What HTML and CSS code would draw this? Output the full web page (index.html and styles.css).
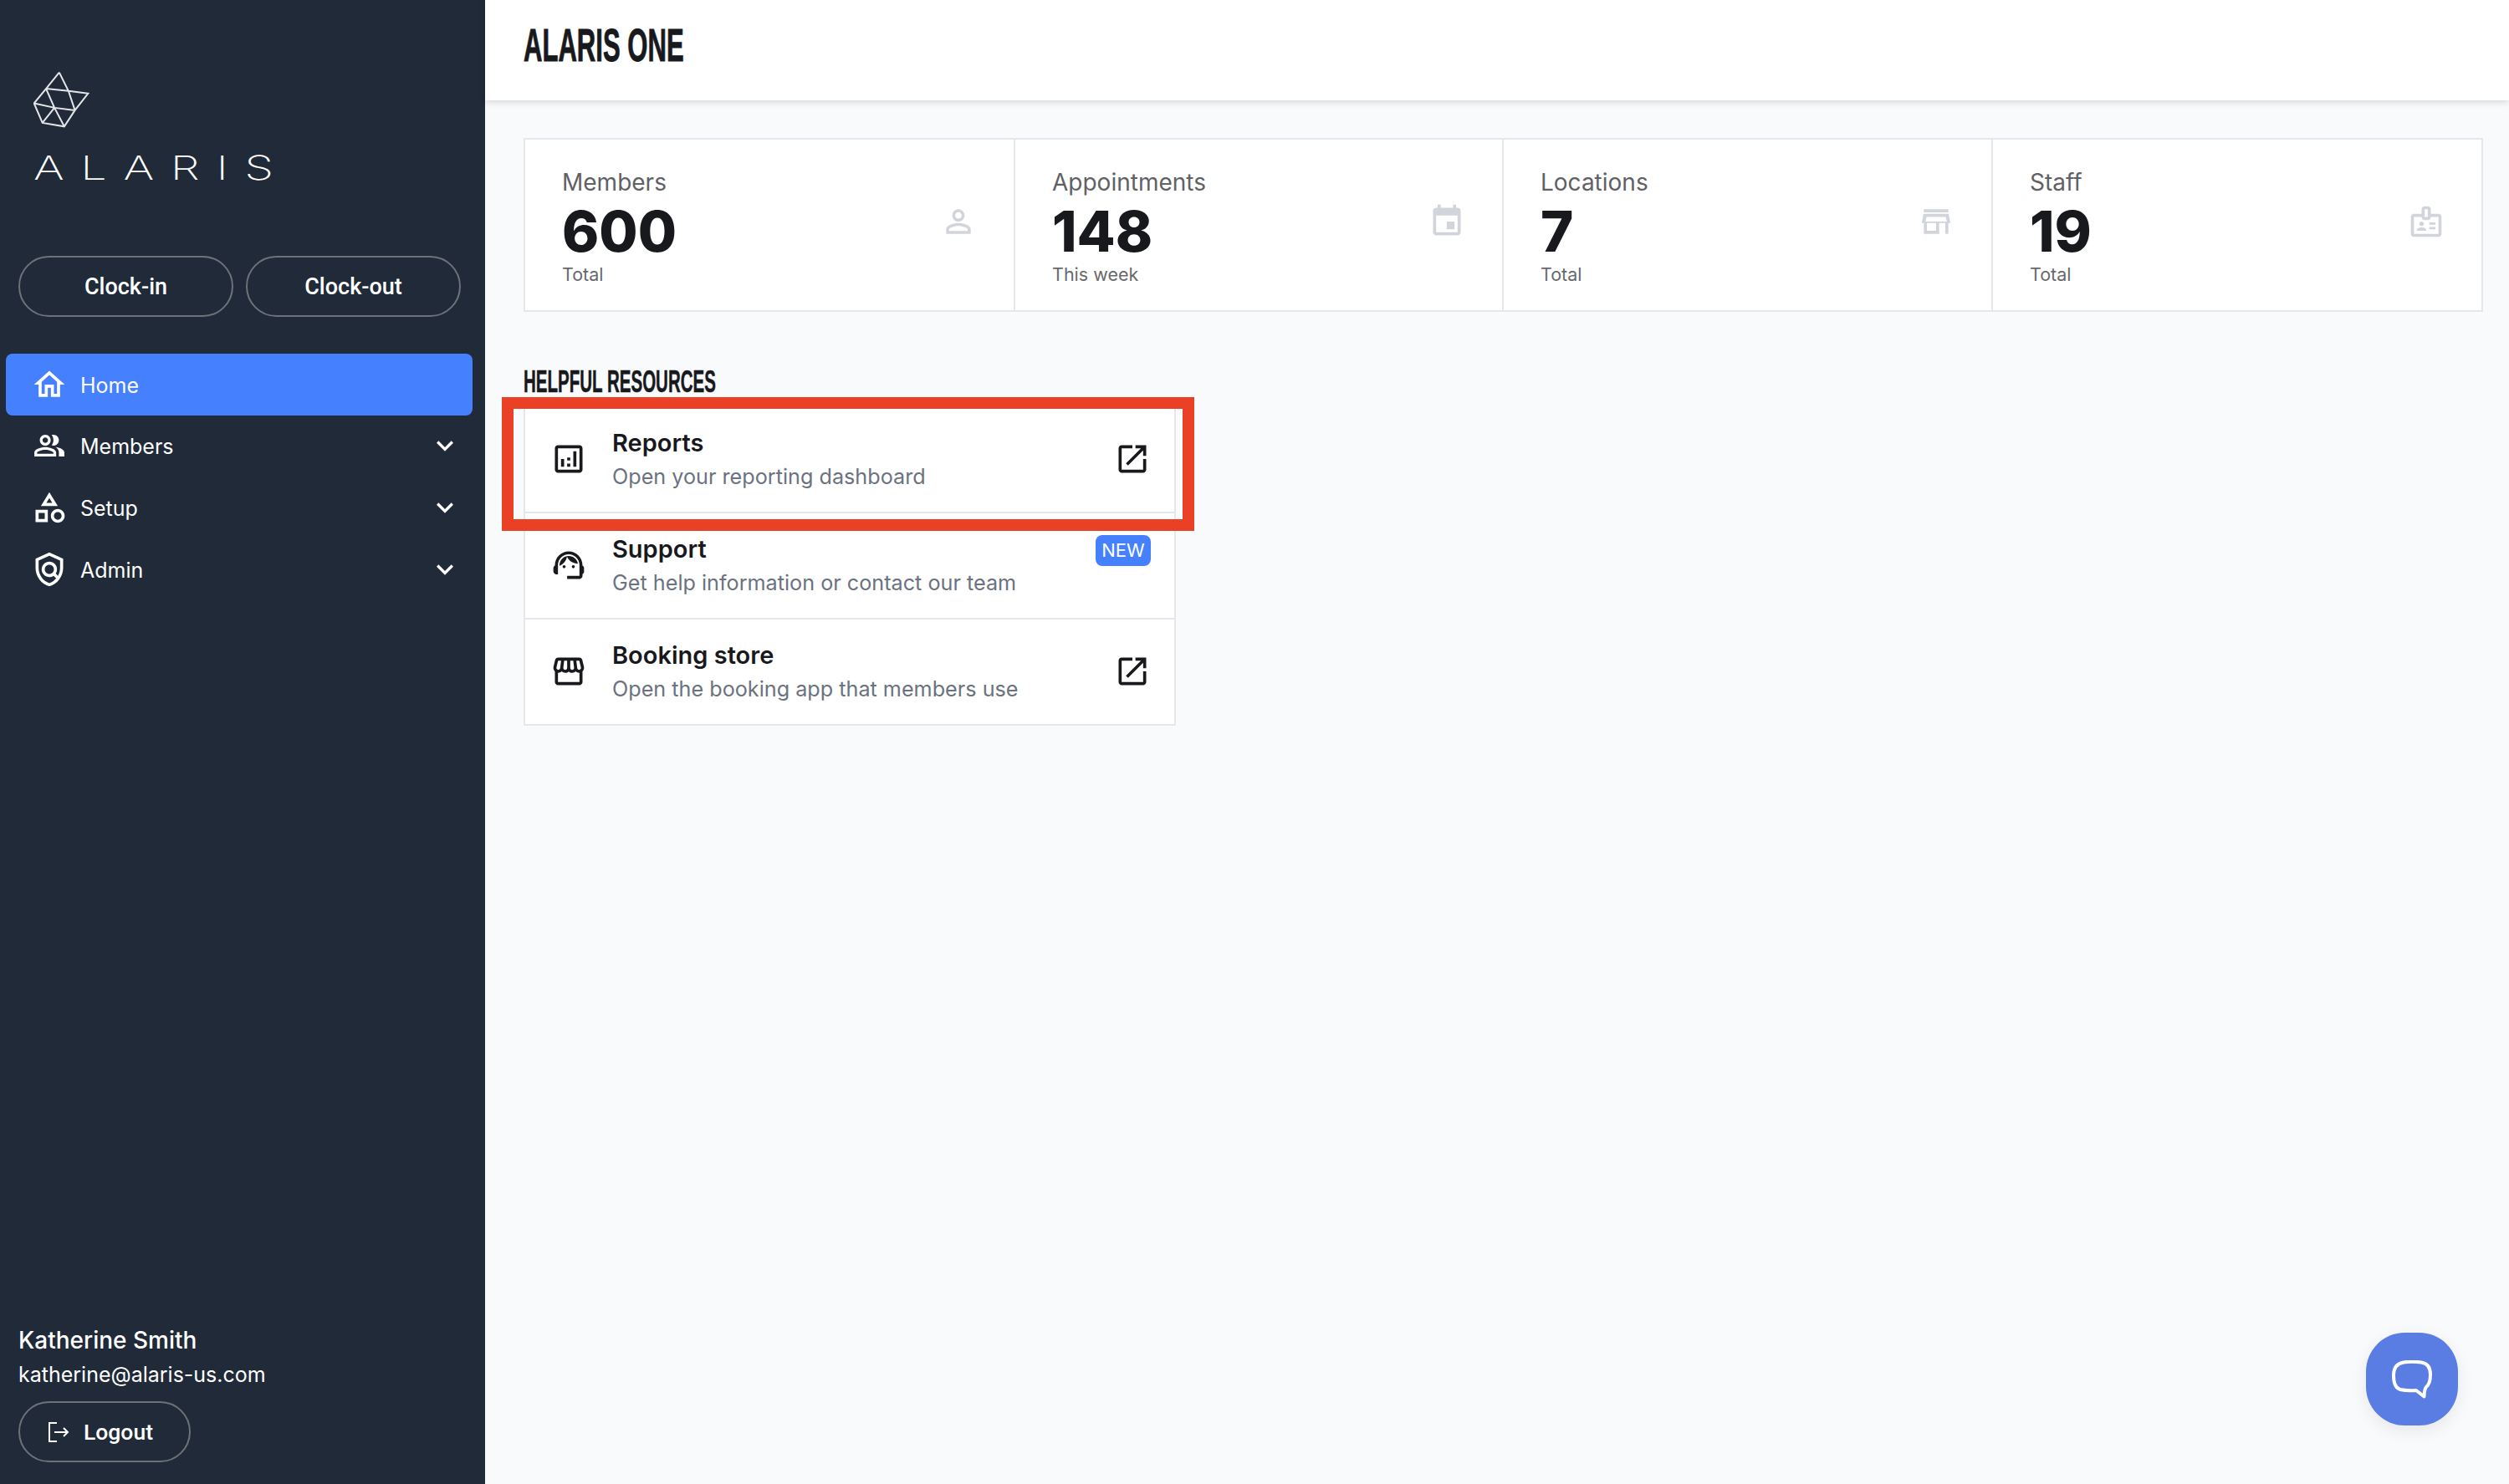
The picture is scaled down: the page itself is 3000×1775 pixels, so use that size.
FILE: index.html
```html
<!DOCTYPE html>
<html lang="en">
<head>
  <meta charset="UTF-8">
  <title>Alaris One</title>
  <link rel="stylesheet" href="styles.css">
</head>

<body>
  <!-- Sidebar -->
  <aside class="sidebar">
    <div class="logo">
      <svg class="logo-mark" viewBox="60 50 200 200">
        <path d="M152 52L105 110L62 162L92 232L170 245L208 187L255 127L185 118L105 110M152 52L185 118L208 187M105 110L135 178L170 245M62 162L135 178L208 187M135 178L92 232"/>
      </svg>
      <div class="logo-text">ALARIS</div>
    </div>

    <div class="clock-btns">
      <button class="pill-btn">Clock-in</button>
      <button class="pill-btn">Clock-out</button>
    </div>

    <nav class="nav">
      <a class="nav-item active">
        <svg class="nav-icon" viewBox="0 0 24 24"><path d="M12 5.69l5 4.5V18h-2v-6H9v6H7v-7.81l5-4.5M12 3L2 12h3v8h6v-6h2v6h6v-8h3L12 3z"/></svg>
        <span>Home</span>
      </a>
      <a class="nav-item">
        <svg class="nav-icon" viewBox="-1.5 -1.5 27 27"><path d="M16.67 13.13C18.04 14.06 19 15.32 19 17v3h4v-3c0-2.18-3.57-3.47-6.33-3.87z"/><path d="M15 12c2.21 0 4-1.79 4-4s-1.79-4-4-4c-.47 0-.91.1-1.33.24C14.5 5.27 15 6.58 15 8s-.5 2.73-1.33 3.76c.42.14.86.24 1.33.24z"/><path d="M9 12c2.21 0 4-1.79 4-4s-1.79-4-4-4-4 1.79-4 4 1.79 4 4 4zm0-6c1.1 0 2 .9 2 2s-.9 2-2 2-2-.9-2-2 .9-2 2-2z"/><path d="M9 13c-2.67 0-8 1.34-8 4v3h16v-3c0-2.66-5.33-4-8-4zm6 5H3v-.99C3.2 16.29 6.3 15 9 15s5.8 1.29 6 2v1z"/></svg>
        <span>Members</span>
        <svg class="chevron" viewBox="0 0 24 24"><path d="M16.59 8.59L12 13.17 7.41 8.59 6 10l6 6 6-6z"/></svg>
      </a>
      <a class="nav-item">
        <svg class="nav-icon" viewBox="0 0 24 24"><path d="M12 2l-5.5 9h11L12 2zm0 3.84L13.93 9h-3.87L12 5.84zM17.5 13c-2.49 0-4.5 2.01-4.5 4.5s2.01 4.5 4.5 4.5 4.5-2.01 4.5-4.5-2.01-4.5-4.5-4.5zm0 7c-1.38 0-2.5-1.12-2.5-2.5s1.12-2.5 2.5-2.5 2.5 1.12 2.5 2.5-1.12 2.5-2.5 2.5zM3 21.5h8v-8H3v8zm2-6h4v4H5v-4z"/></svg>
        <span>Setup</span>
        <svg class="chevron" viewBox="0 0 24 24"><path d="M16.59 8.59L12 13.17 7.41 8.59 6 10l6 6 6-6z"/></svg>
      </a>
      <a class="nav-item">
        <svg class="nav-icon" viewBox="0 0 24 24"><path d="M21,5l-9-4L3,5v6c0,5.55,3.84,10.74,9,12c5.16-1.26,9-6.45,9-12V5z M19,11c0,1.85-0.51,3.65-1.38,5.21l-1.45-1.45 c1.29-1.94,1.07-4.58-0.64-6.29c-1.95-1.95-5.12-1.95-7.07,0c-1.95,1.95-1.95,5.12,0,7.07c1.71,1.71,4.35,1.92,6.29,0.64 l1.72,1.72c-1.19,1.42-2.73,2.51-4.47,3.04C7.98,19.69,5,15.52,5,11V6.3l7-3.11l7,3.11V11z M12,15c-1.66,0-3-1.34-3-3 s1.34-3,3-3s3,1.34,3,3S13.66,15,12,15z"/></svg>
        <span>Admin</span>
        <svg class="chevron" viewBox="0 0 24 24"><path d="M16.59 8.59L12 13.17 7.41 8.59 6 10l6 6 6-6z"/></svg>
      </a>
    </nav>

    <div class="user">
      <div class="user-name">Katherine Smith</div>
      <div class="user-email">katherine@alaris-us.com</div>
      <button class="pill-btn logout-btn">
        <svg class="logout-icon" viewBox="0 0 26 26"><path d="M11 2H2V24H11M8 13H24M19 8L24 13L19 18"/></svg>
        Logout
      </button>
    </div>
  </aside>

  <main class="main">
    <header class="topbar">
      <h1 class="page-title">ALARIS ONE</h1>
    </header>

    <div class="content">
      <!-- Stats -->
      <section class="stats">
        <div class="stat">
          <div>
            <div class="stat-label">Members</div>
            <div class="stat-value">600</div>
            <div class="stat-note">Total</div>
          </div>
          <svg class="stat-icon" viewBox="0 0 24 24"><path d="M12 5.9c1.16 0 2.1.94 2.1 2.1s-.94 2.1-2.1 2.1S9.9 9.16 9.9 8s.94-2.1 2.1-2.1m0 9c2.97 0 6.1 1.46 6.1 2.1v1.1H5.9V17c0-.64 3.13-2.1 6.1-2.1M12 4C9.79 4 8 5.79 8 8s1.79 4 4 4 4-1.79 4-4-1.79-4-4-4zm0 9c-2.67 0-8 1.34-8 4v3h16v-3c0-2.66-5.33-4-8-4z"/></svg>
        </div>
        <div class="stat">
          <div>
            <div class="stat-label">Appointments</div>
            <div class="stat-value">148</div>
            <div class="stat-note">This week</div>
          </div>
          <svg class="stat-icon" viewBox="0 0 24 24"><path d="M17 12h-5v5h5v-5zM16 1v2H8V1H6v2H5c-1.11 0-1.99.9-1.99 2L3 19c0 1.1.89 2 2 2h14c1.1 0 2-.9 2-2V5c0-1.1-.9-2-2-2h-1V1h-2zm3 18H5V8h14v11z"/></svg>
        </div>
        <div class="stat">
          <div>
            <div class="stat-label">Locations</div>
            <div class="stat-value">7</div>
            <div class="stat-note">Total</div>
          </div>
          <svg class="stat-icon" viewBox="0 0 24 24"><path d="M18.36 9l.6 3H5.04l.6-3h12.72M20 4H4v2h16V4zm.16 3H3.84L2.64 13H4v7h10v-7h4v7h2v-7h1.36l-1.2-6zM6 18v-5h6v5H6z"/></svg>
        </div>
        <div class="stat">
          <div>
            <div class="stat-label">Staff</div>
            <div class="stat-value">19</div>
            <div class="stat-note">Total</div>
          </div>
          <svg class="stat-icon" viewBox="0 0 24 24"><path d="M20 7h-5V4c0-1.1-.9-2-2-2h-2c-1.1 0-2 .9-2 2v3H4c-1.1 0-2 .9-2 2v11c0 1.1.9 2 2 2h16c1.1 0 2-.9 2-2V9c0-1.1-.9-2-2-2zM11 4h2v5h-2V4zm9 16H4V9h5c0 1.1.9 2 2 2h2c1.1 0 2-.9 2-2h5v11zm-2-7.5h-4V14h4v-1.5zm0 3h-4V17h4v-1.5zM9 15c.83 0 1.5-.67 1.5-1.5S9.83 12 9 12s-1.5.67-1.5 1.5S8.17 15 9 15zm2.08 1.18c-.64-.28-1.34-.43-2.08-.43s-1.44.15-2.08.43C6.36 16.42 6 16.96 6 17.57V18h6v-.43c0-.61-.36-1.15-.92-1.39z"/></svg>
        </div>
      </section>

      <!-- Helpful resources -->
      <h2 class="section-title">HELPFUL RESOURCES</h2>
      <section class="resources">
        <a class="resource">
          <svg class="resource-icon" viewBox="0 0 24 24"><path d="M19 3H5c-1.1 0-2 .9-2 2v14c0 1.1.9 2 2 2h14c1.1 0 2-.9 2-2V5c0-1.1-.9-2-2-2zm0 16H5V5h14v14z"/><path d="M9 17H7v-5h2v5zM13 17h-2v-2h2v2zm0-4h-2v-2h2v2zM17 17h-2V7h2v10z"/></svg>
          <div class="resource-text">
            <div class="resource-title">Reports</div>
            <div class="resource-desc">Open your reporting dashboard</div>
          </div>
          <svg class="resource-icon" viewBox="0 0 24 24"><path d="M19 19H5V5h7V3H5c-1.11 0-2 .9-2 2v14c0 1.1.89 2 2 2h14c1.1 0 2-.9 2-2v-7h-2v7zM14 3v2h3.59l-9.83 9.83 1.41 1.41L19 6.41V10h2V3h-7z"/></svg>
        </a>
        <a class="resource">
          <svg class="resource-icon" viewBox="0 0 24 24"><path d="M21 12.22C21 6.73 16.74 3 12 3c-4.69 0-9 3.65-9 9.28-.6.34-1 .98-1 1.72v2c0 1.1.9 2 2 2h1v-6.1c0-3.87 3.13-7 7-7s7 3.13 7 7V19h-8v2h8c1.1 0 2-.9 2-2v-1.22c.59-.31 1-.92 1-1.62v-2.3c0-.7-.41-1.31-1-1.64z"/><circle cx="9" cy="13" r="1"/><circle cx="15" cy="13" r="1"/><path d="M18 11.03C17.52 8.18 15.04 6 12.05 6c-3.03 0-6.29 2.51-6.03 6.45 2.47-1.01 4.33-3.21 4.86-5.89 1.31 2.63 4 4.44 7.12 4.47z"/></svg>
          <div class="resource-text">
            <div class="resource-title">Support</div>
            <div class="resource-desc">Get help information or contact our team</div>
          </div>
          <span class="badge">NEW</span>
        </a>
        <a class="resource">
          <svg class="resource-icon" viewBox="0 0 24 24"><path d="M21.9 8.89l-1.05-4.37c-.22-.9-1-1.52-1.91-1.52H5.05c-.9 0-1.69.63-1.9 1.52L2.1 8.89c-.24 1.02-.02 2.06.62 2.88.08.11.19.19.28.29V19c0 1.1.9 2 2 2h14c1.1 0 2-.9 2-2v-6.94c.09-.09.2-.18.28-.28.64-.82.87-1.87.62-2.89zm-2.99-3.9l1.05 4.37c.1.42.01.84-.25 1.17-.14.18-.44.47-.94.47-.61 0-1.14-.49-1.21-1.14L16.98 5l1.93-.01zM13 5h1.96l.54 4.52c.05.39-.07.78-.33 1.07-.22.26-.54.41-.95.41-.67 0-1.22-.59-1.22-1.31V5zM8.49 9.52L9.04 5H11v4.69c0 .72-.55 1.31-1.29 1.31-.34 0-.65-.15-.89-.41-.25-.29-.37-.68-.33-1.07zm-4.45-.16L5.05 5h1.97l-.58 4.86c-.08.65-.6 1.14-1.21 1.14-.49 0-.8-.29-.93-.47-.27-.32-.36-.75-.26-1.17zM5 19v-6.03c.08.01.15.03.23.03.87 0 1.66-.36 2.24-.95.6.6 1.4.95 2.31.95.87 0 1.65-.36 2.23-.93.59.57 1.39.93 2.29.93.84 0 1.64-.35 2.24-.95.58.59 1.37.95 2.24.95.08 0 .15-.02.23-.03V19H5z"/></svg>
          <div class="resource-text">
            <div class="resource-title">Booking store</div>
            <div class="resource-desc">Open the booking app that members use</div>
          </div>
          <svg class="resource-icon" viewBox="0 0 24 24"><path d="M19 19H5V5h7V3H5c-1.11 0-2 .9-2 2v14c0 1.1.89 2 2 2h14c1.1 0 2-.9 2-2v-7h-2v7zM14 3v2h3.59l-9.83 9.83 1.41 1.41L19 6.41V10h2V3h-7z"/></svg>
        </a>
      </section>
    </div>

    <!-- Red highlight drawn over the first resource -->
    <div class="highlight"></div>

    <button class="chat-btn">
      <svg class="chat-icon" viewBox="0 0 48 46"><path d="M14 2.5C19 1.6 29 1.6 35 2.5C42 3.5 46 8 46 17C46 24 45 29 41 32C39.5 33.5 38.8 37 38.5 43.5L29 36C20 36.5 14 36 10 35C4.500 33.500 2 27 2 18C2 9 6 3.800 14 2.500Z"/></svg>
    </button>
  </main>
</body>
</html>
```

FILE: styles.css
```css
* {
  box-sizing: border-box;
}

html, body {
  height: 100%;
}

body {
  margin: 0;
  display: flex;
  overflow: hidden;
  font-family: Inter, "Liberation Sans", sans-serif;
  background: #f9fafb;
  color: #18191d;
}

/* Sidebar */
.sidebar {
  width: 580px;
  flex-shrink: 0;
  display: flex;
  flex-direction: column;
  background: #202a38;
  color: #fff;
}

.logo {
  padding: 86px 0 0 40px;
  height: 306px;
}

.logo-mark {
  display: block;
  width: 67px;
  height: 67px;
  fill: none;
  stroke: #e4e6e9;
  stroke-width: 6;
}

.logo-text {
  margin-top: 24px;
  font-size: 40px;
  line-height: 48px;
  font-weight: 250;
  letter-spacing: 14px;
  transform: scaleX(1.4);
  transform-origin: left;
}

.clock-btns {
  display: flex;
  gap: 15px;
  padding: 0 29px 0 22px;
}

.pill-btn {
  flex: 1;
  height: 73px;
  display: flex;
  align-items: center;
  justify-content: center;
  background: none;
  border: 2px solid #6d7279;
  border-radius: 37px;
  color: #fff;
  font-family: Roboto, sans-serif;
  font-size: 27px;
  font-weight: 500;
}

.nav {
  display: flex;
  flex-direction: column;
  margin-top: 44px;
  padding: 0 15px 0 7px;
}

.nav-item {
  height: 73.600px;
  display: flex;
  align-items: center;
  gap: 15px;
  padding: 0 13px 0 30px;
  border-radius: 8px;
  font-size: 25px;
  color: #fff;
}

.nav-item.active {
  background: #4580ff;
}

.nav-item span {
  flex: 1;
  padding-top: 2px;
}

.nav-icon {
  width: 44px;
  height: 44px;
  fill: #fff;
}

.chevron {
  width: 40px;
  height: 40px;
  fill: #fff;
}

.user {
  margin-top: auto;
  padding: 0 22px 26px;
}

.user-name {
  font-size: 28px;
  line-height: 40px;
  font-weight: 500;
}

.user-email {
  margin-top: 2px;
  font-size: 25px;
  line-height: 38px;
}

.logout-btn {
  flex: none;
  width: 206px;
  margin-top: 13px;
  gap: 17px;
  justify-content: flex-start;
  padding-left: 33px;
  font-size: 26.500px;
}

.logout-icon {
  width: 26px;
  height: 26px;
  fill: none;
  stroke: #fff;
  stroke-width: 2;
}

/* Main area */
.main {
  flex: 1;
  position: relative;
}

.topbar {
  height: 120px;
  padding-left: 46px;
  background: #fff;
  box-shadow: 0 2px 8px rgba(0, 0, 0, 0.15);
}

.page-title {
  margin: 0;
  padding-top: 26px;
  font-family: "Liberation Sans", sans-serif;
  font-size: 56px;
  line-height: 56px;
  font-weight: 700;
  -webkit-text-stroke: 1px #18191d;
  transform: scaleX(0.555);
  transform-origin: left;
  white-space: nowrap;
}

.content {
  padding: 45px 31px 0 46px;
}

.stats {
  display: grid;
  grid-template-columns: 584px 584px 585px 1fr;
  height: 208px;
  background: #fff;
  border: 2px solid #e5e7eb;
}

.stat {
  display: flex;
  justify-content: space-between;
  align-items: center;
  padding: 4px 44px 0;
  border-left: 2px solid #e5e7eb;
}

.stat:first-child {
  border-left: none;
}

.stat-label {
  font-size: 28px;
  line-height: 38px;
  color: #5f6165;
}

.stat-value {
  margin-top: 4px;
  font-size: 67px;
  line-height: 72px;
  font-weight: 800;
}

.stat-note {
  font-size: 21.500px;
  line-height: 30px;
  color: #68696d;
}

.stat-icon {
  width: 44px;
  height: 44px;
  margin-bottom: 12px;
  fill: #d1d5db;
}

.section-title {
  margin: 66px 0 10px;
  font-family: "Liberation Sans", sans-serif;
  font-size: 36px;
  line-height: 36px;
  font-weight: 700;
  -webkit-text-stroke: 0.5px #18191d;
  transform: scaleX(0.57);
  transform-origin: left;
  white-space: nowrap;
}

.resources {
  width: 780px;
  background: #fff;
  border: 2px solid #e5e7eb;
  border-bottom: none;
}

.resource {
  height: 127px;
  display: flex;
  align-items: center;
  gap: 30px;
  padding: 0 28px 0 30px;
  border-bottom: 2px solid #e5e7eb;
}

.resource-text {
  flex: 1;
  padding-top: 3px;
}

.resource-icon {
  width: 44px;
  height: 44px;
  margin-bottom: 2px;
  fill: #18191d;
}

.resource-title {
  font-size: 29px;
  line-height: 38px;
  font-weight: 600;
}

.resource-desc {
  font-size: 25.200px;
  line-height: 42px;
  color: #6b7280;
}

.badge {
  align-self: flex-start;
  margin-top: 26px;
  width: 66px;
  height: 37px;
  background: #4580ff;
  border-radius: 8px;
  color: #fff;
  font-size: 22px;
  line-height: 37px;
  text-align: center;
}

.highlight {
  position: absolute;
  left: 20px;
  top: 475px;
  width: 828px;
  height: 160px;
  border: 14px solid #ea4026;
}

.chat-btn {
  position: absolute;
  right: 61px;
  bottom: 70px;
  width: 110px;
  height: 111px;
  display: flex;
  align-items: center;
  justify-content: center;
  background: #5a7de3;
  border: none;
  border-radius: 42%;
  box-shadow: 0 6px 20px rgba(0, 0, 0, 0.08);
}

.chat-icon {
  width: 48px;
  height: 46px;
  fill: none;
  stroke: #fff;
  stroke-width: 4;
  stroke-linejoin: round;
}
```
